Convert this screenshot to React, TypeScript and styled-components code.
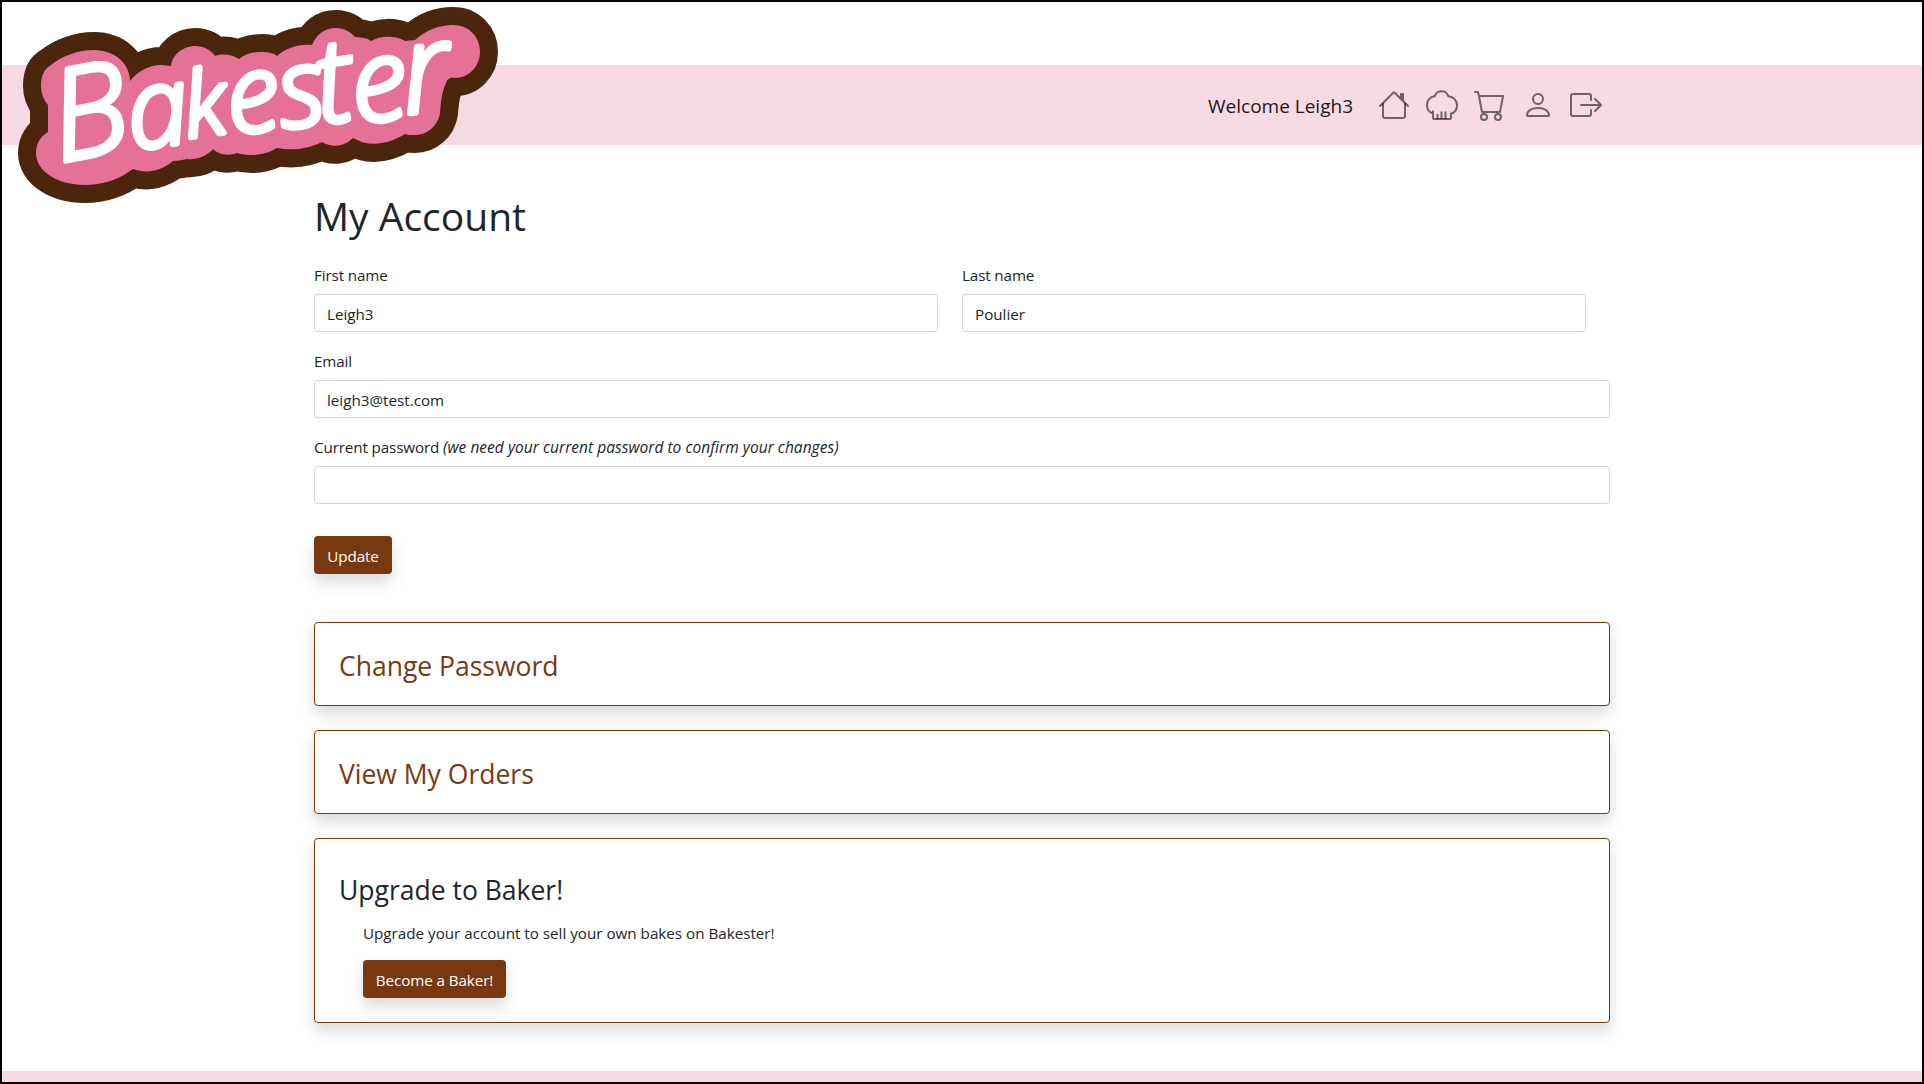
import React from 'react';
import styled, { createGlobalStyle } from 'styled-components';
import { BsCart, BsPerson, BsBoxArrowRight } from 'react-icons/bs';

const GlobalStyle = createGlobalStyle`
  *, *::before, *::after { box-sizing: border-box; }
  body {
    margin: 0;
    background: #fff;
    color: #212529;
    font: 15.2px/24px "Open Sans", "Noto Sans", sans-serif;
  }
  h1, h2, p { margin: 0; font-weight: 400; }
`;

const Page = styled.div`
  height: 1084px;
  border: 2px solid #000;
  display: flex;
  flex-direction: column;
  overflow: hidden;
`;

const Header = styled.header`
  position: relative;
  flex: none;
  margin-top: 63px;
  height: 80px;
  background: #f8dae4;
`;

const Logo = styled.svg`
  position: absolute;
  left: -2px;
  top: -65px;
  overflow: visible;
`;

const LogoText = styled.text`
  font-family: "Open Sans", "Noto Sans", sans-serif;
  font-style: italic;
  font-weight: 300;
`;

const HeaderInner = styled.div`
  width: 1320px;
  height: 100%;
  margin: 0 auto;
  padding: 0 20px;
  display: flex;
  align-items: center;
  justify-content: flex-end;
  gap: 25px;
`;

const Welcome = styled.span`
  font-size: 19px;
  color: #1b1718;
  padding-top: 2px;
  white-space: nowrap;
`;

const Nav = styled.nav`
  display: flex;
  gap: 16px;
  color: rgba(0, 0, 0, 0.55);
`;

const NavLink = styled.a`
  display: block;
  width: 32px;
  height: 32px;
  svg { display: block; width: 32px; height: 32px; }
`;

const Main = styled.main`
  flex: 1;
  width: 1296px;
  margin: 0 auto;
  padding-top: 47px;
`;

const Title = styled.h1`
  font-size: 39px;
  line-height: 48px;
  margin-bottom: 22px;
`;

const Row = styled.div`
  display: grid;
  grid-template-columns: 624px 624px;
  gap: 24px;
`;

const Field = styled.label`
  display: block;
  margin-bottom: 16px;
`;

const Label = styled.span`
  display: block;
  height: 24px;
  padding-top: 1px;
  margin-bottom: 8px;
  letter-spacing: -0.12px;
`;

const Hint = styled.i`
  font-size: 15.5px;
  letter-spacing: 0.03px;
`;

const Input = styled.input`
  display: block;
  width: 100%;
  height: 38px;
  padding: 7px 12px 5px;
  border: 1px solid #ced4da;
  border-radius: 4px;
  background: #fff;
  color: #212529;
  font: inherit;
  outline: none;
`;

const Button = styled.button<{ $width: number }>`
  display: block;
  width: ${(p) => p.$width}px;
  height: 38px;
  padding: 1px 0 0;
  border: 0;
  border-radius: 4px;
  background: #783910;
  color: #fff;
  font: inherit;
  letter-spacing: -0.08px;
  white-space: nowrap;
  box-shadow: 0 8px 16px rgba(0, 0, 0, 0.15);
`;

const FormActions = styled.div`
  padding-top: 16px;
`;

const Cards = styled.section`
  display: flex;
  flex-direction: column;
  gap: 24px;
  margin-top: 48px;
`;

const Card = styled.article<{ $height: number }>`
  height: ${(p) => p.$height}px;
  padding: 24px;
  border: 1px solid #783910;
  border-radius: 4px;
  background: #fff;
  box-shadow: 0 8px 16px rgba(0, 0, 0, 0.15);
`;

const CardTitle = styled.h2<{ $link?: boolean }>`
  font-size: 26.5px;
  line-height: 34px;
  color: ${(p) => (p.$link ? '#783910' : '#212529')};
  margin-top: ${(p) => (p.$link ? 2 : 10)}px;
`;

const CardBody = styled.div`
  padding: 14px 24px 0;
`;

const CardText = styled.p`
  margin-bottom: 15px;
`;

const Footer = styled.footer`
  flex: none;
  height: 11px;
  background: #f8dae4;
`;

const badge =
  'M41 86C41 76 44 69 51 65C62 56 78 50 94 50C115 50 130 64 130 81C138 71 149 65 162 65L171 66C172 55 183 46 195 46C204 46 211 50 215 56C224 53 233 55 239 59C246 53 255 52 263 52C269 52 273 53 277 56C285 49 297 44 312 45C316 35 324 28 336 28C344 28 351 32 355 37C361 37 367 38 371 41C380 36 395 35 405 41L415 40C426 30 440 25 453 25C469 25 480 37 480 52C480 66 469 78 455 78C450 77 447 79 446 83C441 94 441 103 440 113C438 126 427 135 415 135C411 135 408 135 405 134C388 144 370 148 353 138C344 147 332 148 322 142C308 149 292 151 277 148C266 155 251 157 237 153C228 156 219 155 213 149C206 157 196 160 187 159C182 160 177 161 173 161C161 171 147 174 133 169C118 180 102 185 85 185C57 185 36 171 36 153C36 143 41 136 48 132L48 105C43 99 41 92 41 86Z';

const BakesterLogo = () => (
  <Logo width="510" height="220" viewBox="0 0 510 220" role="img" aria-label="Bakester">
    <path d={badge} fill="#4b260d" stroke="#4b260d" strokeWidth="36" strokeLinejoin="round" />
    <path d={badge} fill="#e57197" />
    <LogoText
      fill="#fff"
      stroke="#fff"
      strokeWidth="5.5"
      strokeLinejoin="round"
      x="60 132 188 231 283 321 356 406"
      y="162 150 138 135 129 124 124 114"
      rotate="-11 -8 -8 -8 -8 -9 -8 -6"
    >
      <tspan fontSize="126">B</tspan>
      <tspan fontSize="110">a</tspan>
      <tspan fontSize="90">k</tspan>
      <tspan fontSize="108">e</tspan>
      <tspan fontSize="109">s</tspan>
      <tspan fontSize="116">t</tspan>
      <tspan fontSize="114">e</tspan>
      <tspan fontSize="124">r</tspan>
    </LogoText>
  </Logo>
);

const House = () => (
  <svg viewBox="0 0 16 16" fill="currentColor">
    <path d="M2 13.5V7h1v6.5a.5.5 0 0 0 .5.5h9a.5.5 0 0 0 .5-.5V7h1v6.5a1.5 1.5 0 0 1-1.5 1.5h-9A1.5 1.5 0 0 1 2 13.5zm11-11V6l-2-2V2.5a.5.5 0 0 1 .5-.5h1a.5.5 0 0 1 .5.5z" />
    <path d="M7.293 1.5a1 1 0 0 1 1.414 0l6.647 6.646a.5.5 0 0 1-.708.708L8 2.207 1.354 8.854a.5.5 0 1 1-.708-.708L7.293 1.5z" />
  </svg>
);

const ChefHat = () => (
  <svg viewBox="0 0 32 32" fill="none" stroke="currentColor" strokeWidth="2" strokeLinejoin="round">
    <path d="M7 21.5V28.500Q7 30 8.500 30H23.500Q25 30 25 28.500V24.500C28.500 24 31 20.500 31 16.500C31 11 27 7.500 22.300 7.300C21.500 4.200 18.500 2.300 15.500 2.300C12 2.300 9.700 4.200 8.700 7.300C4 7.500 1 11.500 1 16C1 20.500 3.500 23.500 7 24.500" />
    <path d="M11.500 25V30M15.500 22.500V30M19.500 22.500V30" />
  </svg>
);

export default function App() {
  return (
    <>
      <GlobalStyle />
      <Page>
        <Header>
          <HeaderInner>
            <Welcome>Welcome Leigh3</Welcome>
            <Nav>
              <NavLink><House /></NavLink>
              <NavLink><ChefHat /></NavLink>
              <NavLink><BsCart /></NavLink>
              <NavLink><BsPerson /></NavLink>
              <NavLink><BsBoxArrowRight /></NavLink>
            </Nav>
          </HeaderInner>
          <BakesterLogo />
        </Header>
        <Main>
          <Title>My Account</Title>
          <Row>
            <Field>
              <Label>First name</Label>
              <Input defaultValue="Leigh3" />
            </Field>
            <Field>
              <Label>Last name</Label>
              <Input defaultValue="Poulier" />
            </Field>
          </Row>
          <Field>
            <Label>Email</Label>
            <Input defaultValue="leigh3@test.com" />
          </Field>
          <Field>
            <Label>
              Current password <Hint>(we need your current password to confirm your changes)</Hint>
            </Label>
            <Input type="password" />
          </Field>
          <FormActions>
            <Button $width={78}>Update</Button>
          </FormActions>
          <Cards>
            <Card $height={84}>
              <CardTitle $link>Change Password</CardTitle>
            </Card>
            <Card $height={84}>
              <CardTitle $link>View My Orders</CardTitle>
            </Card>
            <Card $height={185}>
              <CardTitle>Upgrade to Baker!</CardTitle>
              <CardBody>
                <CardText>Upgrade your account to sell your own bakes on Bakester!</CardText>
                <Button $width={143}>Become a Baker!</Button>
              </CardBody>
            </Card>
          </Cards>
        </Main>
        <Footer />
      </Page>
    </>
  );
}
